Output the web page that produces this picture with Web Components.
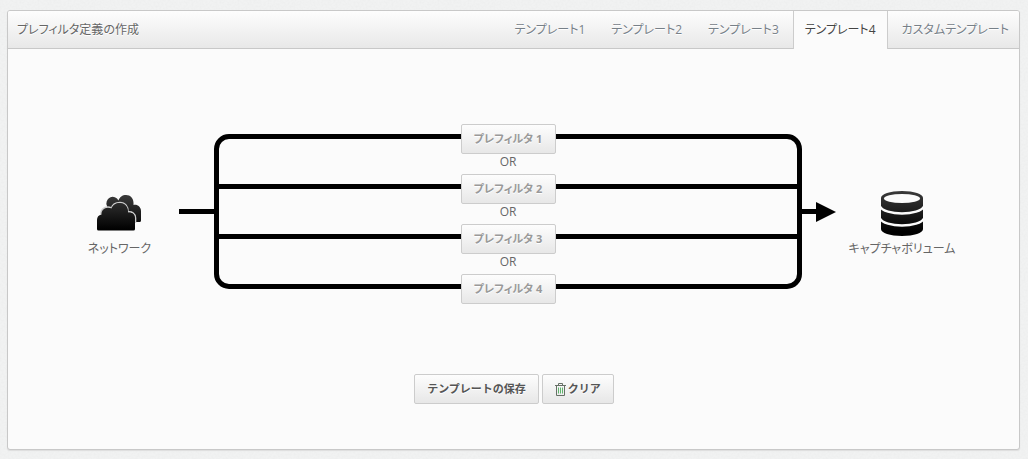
<!DOCTYPE html>
<html lang="ja">
<head>
<meta charset="utf-8">
<title>プレフィルタ定義の作成</title>
<style>
  body {
    margin: 0;
    padding: 10px 8px 9px 7px;
    color: #666;
    font: 12px/20px "Open Sans", "Noto Sans CJK JP", sans-serif;
    font-feature-settings: "palt";
    background: #f1f2f2 url("data:image/svg+xml,%3Csvg xmlns='http://www.w3.org/2000/svg' width='200' height='200'%3E%3Cfilter id='n'%3E%3CfeTurbulence type='fractalNoise' baseFrequency='.5' numOctaves='2' stitchTiles='stitch'/%3E%3CfeColorMatrix values='0 0 0 0 .5 0 0 0 0 .5 0 0 0 0 .5 .16 0 0 0 -.06'/%3E%3C/filter%3E%3Crect width='200' height='200' filter='url(%23n)'/%3E%3C/svg%3E");
  }
</style>
</head>
<body>
<filter-panel heading="プレフィルタ定義の作成">
  <panel-tab slot="tabs">テンプレート1</panel-tab>
  <panel-tab slot="tabs">テンプレート2</panel-tab>
  <panel-tab slot="tabs">テンプレート3</panel-tab>
  <panel-tab slot="tabs" selected>テンプレート4</panel-tab>
  <panel-tab slot="tabs">カスタムテンプレート</panel-tab>
  <flow-diagram>
    <flow-node slot="source" icon="cloud">ネットワーク</flow-node>
    <push-button slot="branch" muted>プレフィルタ 1</push-button>
    <push-button slot="branch" muted>プレフィルタ 2</push-button>
    <push-button slot="branch" muted>プレフィルタ 3</push-button>
    <push-button slot="branch" muted>プレフィルタ 4</push-button>
    <flow-node slot="target" icon="disk">キャプチャボリューム</flow-node>
  </flow-diagram>
  <push-button slot="actions">テンプレートの保存</push-button>
  <push-button slot="actions" icon="trash">クリア</push-button>
</filter-panel>

<script>
const define = (name, html, setup) => {
  const template = document.createElement('template');
  template.innerHTML = html;
  customElements.define(name, class extends HTMLElement {
    constructor() {
      super();
      this.attachShadow({ mode: 'open' }).append(template.content.cloneNode(true));
    }
    connectedCallback() { if (setup) setup(this, this.shadowRoot); }
  });
};

const icons = {
  cloud: `<svg width="48" height="48" viewBox="1 0 48 48" aria-hidden="true">
    <defs><linearGradient id="g" x1="0" y1="6" x2="0" y2="41" gradientUnits="userSpaceOnUse"><stop stop-color="#3a3a3a"/><stop offset="1"/></linearGradient></defs>
    <path fill="url(#g)" d="M12 33V17a6 6 0 0 1 11.500-5.500C24.500 8 27.500 6 31 6c4.500 0 7.500 3.500 7.500 8v2c4-.8 7.500 2 7.500 6v9.500q0 1.500-1.500 1.500z"/>
    <path fill="none" stroke="#ccc" stroke-width="1.600" d="M6 25.500C5.500 20 11 16.500 16.500 19 17.500 15.500 21 13.500 25 13.500c5 0 8.500 4 8 9.500 4-.5 7.500 1.500 7.500 6V34"/>
    <path fill="url(#g)" d="M3.500 41.500q-1.500 0-1.500-1.500V31c0-3 1.500-5 4.500-5.500C6 20.500 11 17 16.500 19.500 17.500 16 21 14 25 14c5 0 8.500 4 8 9.500 4-.5 7 1.500 7 6V40q0 1.500-1.500 1.500z"/>
  </svg>`,
  disk: `<svg width="48" height="48" viewBox="0 0 48 48" aria-hidden="true">
    <defs><linearGradient id="g" x1="0" y1="2" x2="0" y2="47" gradientUnits="userSpaceOnUse"><stop stop-color="#3a3a3a"/><stop offset=".9"/></linearGradient></defs>
    <path fill="url(#g)" d="M3 9C3 5 12 2 24 2s21 3 21 7v31c0 4-9 7-21 7S3 44 3 40z"/>
    <ellipse cx="24" cy="9.500" rx="18" ry="4.500" fill="#fbfbfb"/>
    <path fill="none" stroke="#fbfbfb" stroke-width="2.400" d="M2 17.500C4 22 14 24.500 24 24.500S44 22 46 17.500M2 29.500C4 34 14 36.500 24 36.500S44 34 46 29.500"/>
  </svg>`,
  trash: `<svg width="11" height="13" viewBox="0 0 11 13" aria-hidden="true" fill="none" stroke="#667066">
    <path d="M3.500 2V.5h4V2M0 2.500h11M1.500 3v9.500h8V3"/><path stroke="#5fb56c" d="M3.500 4.500v6M5.500 4.500v6M7.500 4.500v6"/>
  </svg>`
};

define('push-button', `
  <style>
    :host { display: inline-block; }
    button {
      display: flex; align-items: center; justify-content: center; gap: 2px;
      box-sizing: border-box; width: 100%; height: 30px; padding: 0 12px;
      border: 1px solid #ccc; border-radius: 2px;
      background: linear-gradient(#fdfdfd, #e7e7e7);
      color: #555; font: inherit; font-size: 11px; font-weight: bold; font-feature-settings: normal;
      text-shadow: 0 1px 0 #fff; white-space: nowrap; cursor: pointer;
    }
    :host([muted]) button { padding: 0; color: #999; font-feature-settings: inherit; }
    .icon { display: contents; }
  </style>
  <button type="button"><span class="icon"></span><span><slot></slot></span></button>`,
  (host, root) => {
    root.querySelector('.icon').innerHTML = icons[host.getAttribute('icon')] || '';
  });

define('panel-tab', `
  <style>
    :host { display: block; }
    a {
      display: block; padding: 9px 11px 8px; border: solid transparent; border-width: 0 1px;
      color: #778088; text-decoration: none; text-shadow: 0 1px 0 #fff; white-space: nowrap;
    }
    :host(:last-child), :host(:last-of-type) { margin-right: -2px; }
    :host([selected]) { margin-bottom: -1px; }
    :host([selected]) a { padding-bottom: 9px; border-color: #ccc; background: #fbfbfb; color: #444; }
  </style>
  <a href="#"><slot></slot></a>`,
  (host, root) => {
    if (host.hasAttribute('selected')) root.querySelector('a').setAttribute('aria-current', 'page');
  });

define('filter-panel', `
  <style>
    :host {
      display: block; border: 1px solid #c8c8c8; border-radius: 3px;
      background: #fbfbfb; box-shadow: 0 1px 1px #ddd;
    }
    header {
      display: flex; justify-content: space-between; padding: 0 0 0 9px;
      border-bottom: 1px solid #c8c8c8; border-radius: 2px 2px 0 0;
      background: linear-gradient(#fdfdfd, #e8e8e8);
    }
    h1 { margin: 0; padding: 9px 0 8px; font: inherit; text-shadow: 0 1px 0 #fff; white-space: nowrap; }
    nav { display: flex; gap: 2px; }
    main { padding: 75px 51px 45px 52px; }
    footer { display: flex; justify-content: center; gap: 3px; margin-top: 70px; }
  </style>
  <header><h1></h1><nav><slot name="tabs"></slot></nav></header>
  <main>
    <slot></slot>
    <footer><slot name="actions"></slot></footer>
  </main>`,
  (host, root) => { root.querySelector('h1').textContent = host.getAttribute('heading'); });

define('flow-node', `
  <style>
    :host { display: flex; flex-direction: column; align-items: center; white-space: nowrap; }
    .icon { height: 48px; }
    .label { padding-top: 2px; }
  </style>
  <div class="icon"></div><div class="label"><slot></slot></div>`,
  (host, root) => {
    root.querySelector('.icon').innerHTML = icons[host.getAttribute('icon')];
  });

define('flow-diagram', `
  <style>
    :host { display: grid; grid-template-columns: 119px 35px 1fr 34px 132px; }
    .end { padding-top: 65px; }
    .wire { display: flex; align-items: center; padding-bottom: 5px; }
    .line { flex: 1; height: 5px; background: #000; }
    .bus { position: relative; }
    .frame { position: absolute; inset: 10px 0 15px; border: 5px solid #000; border-radius: 15px; }
    ol { position: relative; margin: 0; padding: 0; list-style: none; }
    li { display: flex; flex-direction: column; align-items: center; }
    li.inner { background: linear-gradient(#000, #000) 0 10px / 100% 5px no-repeat; }
    li > div { width: 95px; }
    .or { display: block; line-height: 16px; padding-bottom: 4px; }
  </style>
  <div class="end"><slot name="source"></slot></div>
  <div class="wire"><div class="line"></div></div>
  <div class="bus"><div class="frame"></div><ol></ol></div>
  <div class="wire"><div class="line"></div><svg width="20" height="20" aria-hidden="true"><path d="M0 0l20 10-20 10z"/></svg></div>
  <div class="end"><slot name="target"></slot></div>`,
  (host, root) => {
    const list = root.querySelector('ol');
    const branches = [...host.querySelectorAll('[slot^=branch]')];
    branches.forEach((branch, i) => {
      const last = i === branches.length - 1;
      branch.slot = 'branch' + i;
      branch.style.display = 'block';
      const item = document.createElement('li');
      if (i && !last) item.className = 'inner';
      item.innerHTML = `<div><slot name="branch${i}"></slot></div>${last ? '' : '<span class="or">OR</span>'}`;
      list.append(item);
    });
  });
</script>
</body>
</html>
